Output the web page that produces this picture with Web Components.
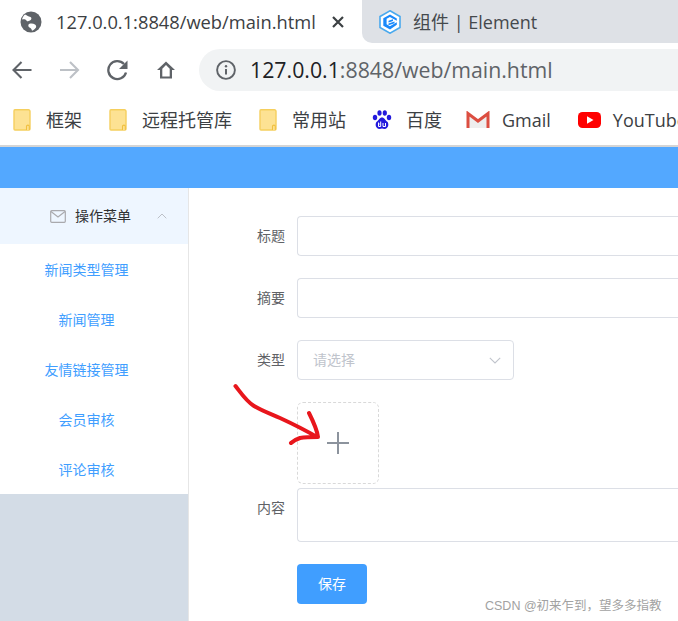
<!DOCTYPE html>
<html><head><meta charset="utf-8">
<style>
html,body{margin:0;padding:0;width:678px;height:621px;overflow:hidden;background:#fff;font-family:"Open Sans","Noto Sans CJK SC",sans-serif}
</style></head><body>
<app-root></app-root>
<script>
const CJK='"Noto Sans CJK SC"';
class Base extends HTMLElement{
  constructor(){super();this.attachShadow({mode:'open'}).innerHTML=this.constructor.html;}
}
function def(name,html){customElements.define(name,class extends Base{static html=html;});}

def('folder-icon',`<style>:host{display:block;width:18px;height:22px}svg{display:block}</style>
<svg width="18" height="22" viewBox="0 0 18 22"><path d="M2 .8h13.500a1.500 1.500 0 0 1 1.500 1.500V20a1 1 0 0 1-1 1H2a1 1 0 0 1-1-1V2A1.200 1.200 0 0 1 2 .8z" fill="#fde293" stroke="#f5cf5e" stroke-width="1.400"/><path d="M13.500 21v-3.500a1.300 1.300 0 0 1 2.800 0V21" fill="#fde293" stroke="#f0c040" stroke-width="1.100"/></svg>`);

def('bookmark-item',`<style>:host{display:flex;align-items:center;flex:none;color:#3c4043;font:18px/24px "Open Sans",${CJK},sans-serif;white-space:nowrap}
::slotted([slot=icon]){flex:none}
.t{display:block;margin-left:var(--gap,15px)}</style><slot name="icon"></slot><span class="t"><slot></slot></span>`);

def('browser-tabs',`<style>:host{display:flex;height:43px;background:#dee1e6;color:#3c4043;font:18px/24px "Open Sans",${CJK},sans-serif;overflow:hidden;flex:none}
.active{width:362px;flex:none;background:#fff;display:flex;align-items:center;padding-left:20px;box-sizing:border-box;position:relative}
.active svg{flex:none;margin-right:14px}
.x{margin-left:15px;flex:none}
.next{position:relative;flex:1;background:#dee1e6;border-bottom-left-radius:10px;display:flex;align-items:center;padding-left:17px;color:#45494d;box-shadow:-12px 0 0 #fff}
.next svg{flex:none;margin-right:12px}
.title{font-size:18.300px;white-space:nowrap}
</style>
<div class="active"><svg width="22" height="22" viewBox="0 0 22 22"><circle cx="11" cy="11" r="10.500" fill="#5f6368"/><path d="M5 3.500c2.500 1 3 2 5.500 2.500 1.500.5 1 3-.5 3.500-2 .7-2.500 1.500-3.500 0C5.500 8 3.500 8 2 8.500 2.500 6.500 3.500 4.800 5 3.500zM9 13c2-.8 4.500-.5 6 .5.800.8 1.500 1.500 1 3-1 1.500-2.500 2.700-4 3.200-.5-1.700-1-2.700-2.500-3.200C8 15.500 8 14 9 13z" fill="#fff"/></svg><span class="title">127.0.0.1:8848/web/main.html</span>
<svg class="x" width="14" height="14" viewBox="0 0 14 14"><path d="M2 2l10 10M12 2L2 12" stroke="#3c4043" stroke-width="2.200" fill="none"/></svg></div>
<div class="next"><svg width="22" height="24" viewBox="0 0 22 24"><path d="M11 .8l10 5.700v11L11 23.200 1 17.500v-11z" fill="#fff" stroke="#49a9ee" stroke-width="1.600"/><path d="M11 4.500l6.800 3.900v2.300l-6.900-3.800-3.300 1.800v5.600l3.300 1.900 6.900-3.900v2.400L11 19.500l-6.700-3.800V8.300z" fill="#1989fa"/><path d="M9.500 10.800l4.500-1.500v1.800l-4.500 1.500zM9.500 13.500l6-2v1.700l-6 2z" fill="#1989fa"/></svg><span>组件 | Element</span></div>`);

def('browser-toolbar',`<style>:host{display:flex;align-items:center;height:53px;background:#fff;flex:none;position:relative}
svg{display:block;flex:none}
.icons{display:flex;align-items:center;gap:26px;padding-left:10px;flex:none}
.omni{margin-left:23px;flex:1;height:42px;margin-top:1px;border-radius:21px 0 0 21px;background:#f1f3f4;display:flex;align-items:center;padding-left:17px;font:21.300px/28px "Open Sans",sans-serif;color:#5f6368;white-space:nowrap}
.omni svg{margin-right:14px}.h{color:#202124}
</style>
<div class="icons">
<svg width="22" height="22" viewBox="0 0 22 22"><path d="M21.500 11H4M11.500 3L3.500 11l8 8" fill="none" stroke="#5f6368" stroke-width="2.100"/></svg>
<svg width="22" height="22" viewBox="0 0 22 22"><path d="M2 11h18M12 3l8 8-8 8" fill="none" stroke="#bdc1c6" stroke-width="2.100"/></svg>
<svg width="22" height="22" viewBox="0 0 22 22"><path d="M20 13.500A9 9 0 1 1 18 5" fill="none" stroke="#5f6368" stroke-width="2.300"/><path d="M21.500 1.500v8.500h-8.500z" fill="#5f6368"/></svg>
<svg width="20" height="20" viewBox="0 0 20 20" style="margin-left:2px"><path d="M10 1.500L1 10h3v8.500h12V10h3zM6.300 16.500V8.800L10 5l3.700 3.800v7.700z" fill="#5f6368"/></svg>
</div>
<div class="omni"><svg width="20" height="20" viewBox="0 0 20 20"><circle cx="10" cy="10" r="8.900" fill="none" stroke="#5f6368" stroke-width="1.900"/><path d="M10 9v5.500" stroke="#5f6368" stroke-width="2"/><circle cx="10" cy="6.300" r="1.200" fill="#5f6368"/></svg><span><span class="h">127.0.0.1</span>:8848/web/main.html</span></div>`);

def('bookmark-bar',`<style>:host{display:flex;height:49px;box-sizing:border-box;align-items:center;padding:0 0 2px 13px;background:#fff;overflow:hidden;flex:none}</style><slot></slot>`);

def('nav-menu',`<style>:host{display:block;background:#fff;font:14px/20px "Noto Sans CJK SC",sans-serif}
.head{height:56px;background:#eef6ff;display:flex;align-items:center;color:#303133;padding-left:50px;box-sizing:border-box}
.head svg{flex:none}
.head span{margin:-2px 0 0 9px}
.chev{margin-left:26px}
</style>
<div class="head"><svg width="16" height="13" viewBox="0 0 16 13"><rect x=".7" y=".7" width="14.600" height="11.600" rx="1" fill="none" stroke="#a9a9ad" stroke-width="1.200"/><path d="M1 1.500l7 5.500 7-5.500" fill="none" stroke="#a9a9ad" stroke-width="1.100"/></svg><span>操作菜单</span>
<svg class="chev" width="10" height="6" viewBox="0 0 10 6"><path d="M.7 5.300L5 1l4.300 4.300" fill="none" stroke="#bcc0c7" stroke-width="1"/></svg></div>
<slot></slot>`);

def('nav-item',`<style>:host{display:flex;height:50px;align-items:center;justify-content:center;padding-right:15px;color:#409eff;font:14px/20px "Noto Sans CJK SC",sans-serif;white-space:nowrap}</style><slot></slot>`);

def('form-row',`<style>:host{display:flex;align-items:flex-start;margin-bottom:var(--mb,22px)}
.l{width:96px;flex:none;text-align:right;color:#606266;font:14px/38px "Noto Sans CJK SC",sans-serif;padding-right:12px}
.c{flex:1;min-width:0}</style><div class="l"><slot name="label"></slot></div><div class="c"><slot></slot></div>`);

def('text-box',`<style>:host{display:block;box-sizing:border-box;height:40px;border:1px solid #dcdfe6;border-right:0;border-radius:4px 0 0 4px;background:#fff;width:calc(100% + 20px)}</style>`);

def('select-box',`<style>:host{display:flex;align-items:center;justify-content:space-between;box-sizing:border-box;width:217px;height:40px;border:1px solid #dcdfe6;border-radius:4px;padding:0 12px 0 15px;color:#c0c4cc;font:14px/20px "Noto Sans CJK SC",sans-serif}span{margin-top:-2px}</style><span>请选择</span><svg width="12" height="7" viewBox="0 0 12 7"><path d="M.8.800L6 6l5.200-5.200" fill="none" stroke="#c0c4cc" stroke-width="1.100"/></svg>`);

def('upload-box',`<style>:host{display:flex;align-items:center;justify-content:center;box-sizing:border-box;width:82px;height:82px;border:1px dashed #d9d9d9;border-radius:6px}svg{display:block}</style><svg width="24" height="24" viewBox="0 0 24 24"><path d="M12 1v22M1 12h22" stroke="#8c939d" stroke-width="2"/></svg>`);

def('text-area',`<style>:host{display:block;box-sizing:border-box;height:54px;border:1px solid #dcdfe6;border-right:0;border-radius:4px 0 0 4px;width:calc(100% + 20px)}</style>`);

def('el-button',`<style>:host{display:flex;align-items:center;justify-content:center;width:70px;height:40px;box-sizing:border-box;padding-bottom:2px;background:#409eff;border-radius:4px;color:#fff;font:14px/20px "Noto Sans CJK SC",sans-serif}</style><slot></slot>`);

def('app-root',`<style>:host{display:flex;flex-direction:column;width:678px;height:621px;position:relative;overflow:hidden}
.sep{height:2px;background:#d5d5d5;flex:none}
.hdr{height:41px;background:#53a8ff;flex:none}
.body{flex:1;display:flex;min-height:0}
aside{width:188px;flex:none;background:#d3dce6;border-right:1px solid #e6e6e6}
main{flex:1;min-width:0;padding:28px 0 0 0;background:#fff}
.wm{position:absolute;left:485px;top:598px;color:#a2a2a2;font:12.500px/16px "Liberation Sans","Noto Sans CJK SC",sans-serif;white-space:nowrap}
.arrow{position:absolute;left:230px;top:380px;pointer-events:none}
</style>
<browser-tabs></browser-tabs>
<browser-toolbar></browser-toolbar>
<bookmark-bar>
<bookmark-item style="margin-right:27px"><folder-icon slot="icon"></folder-icon>框架</bookmark-item>
<bookmark-item style="margin-right:27px"><folder-icon slot="icon"></folder-icon>远程托管库</bookmark-item>
<bookmark-item style="margin-right:26px"><folder-icon slot="icon"></folder-icon>常用站</bookmark-item>
<bookmark-item style="margin-right:24px;--gap:14px"><svg slot="icon" width="20" height="20" viewBox="0 0 20 20"><g fill="#2319dc"><ellipse cx="3" cy="7.500" rx="2.200" ry="2.800"/><ellipse cx="7.500" cy="3" rx="2.100" ry="2.800"/><ellipse cx="12.800" cy="3" rx="2.100" ry="2.800"/><ellipse cx="17" cy="7.500" rx="2.200" ry="2.800"/><path d="M10 7.500c2.500 0 3.200 2.800 5 4 2.500 1.800 1.500 7.500-2.500 7.500-1 0-1.700-.4-2.500-.4s-1.500.4-2.500.4C3.500 19 2.500 13.300 5 11.500c1.800-1.200 2.500-4 5-4z"/></g><path d="M6.500 12.500v4h2.200v-5M7.700 14H6.500M11 13v3.500h2.500V13" fill="none" stroke="#fff" stroke-width="1"/></svg>百度</bookmark-item>
<bookmark-item style="margin-right:27px;--gap:12px"><svg slot="icon" width="24" height="18" viewBox="0 0 24 18"><path d="M1.500 2v15h21V2L12 10z" fill="#eee"/><path d="M2 17V2.500L12 10 22 2.500V17" fill="none" stroke="#dc4e41" stroke-width="3"/></svg>Gmail</bookmark-item>
<bookmark-item style="--gap:12px"><svg slot="icon" width="23" height="16" viewBox="0 0 23 16"><rect x="0" y="0" width="23" height="16" rx="4.500" fill="#f00"/><path d="M9 4.300l6.500 3.700L9 11.700z" fill="#fff"/></svg>YouTube</bookmark-item>
</bookmark-bar>
<div class="sep"></div>
<div class="hdr"></div>
<div class="body">
<aside><nav-menu><nav-item>新闻类型管理</nav-item><nav-item>新闻管理</nav-item><nav-item>友情链接管理</nav-item><nav-item>会员审核</nav-item><nav-item>评论审核</nav-item></nav-menu></aside>
<main>
<form-row><span slot="label">标题</span><text-box></text-box></form-row>
<form-row><span slot="label">摘要</span><text-box></text-box></form-row>
<form-row><span slot="label">类型</span><select-box></select-box></form-row>
<form-row style="--mb:4px"><span slot="label"></span><upload-box></upload-box></form-row>
<form-row><span slot="label">内容</span><text-area></text-area></form-row>
<form-row><span slot="label"></span><el-button>保存</el-button></form-row>
</main>
</div>
<svg class="arrow" width="100" height="70" viewBox="0 0 100 70"><path d="M5.500 6C11 13 16 21 24 26c8 5 17 8 26 12 13 6 25 12 37 19M61 63c3-3 6-4 9-5 6-1 12-1 18-1-1-8-5-16-9-24" fill="none" stroke="#e8161c" stroke-width="4" stroke-linecap="round" stroke-linejoin="round"/></svg>
<div class="wm">CSDN @初来乍到，望多多指教</div>`);
</script>
</body></html>
